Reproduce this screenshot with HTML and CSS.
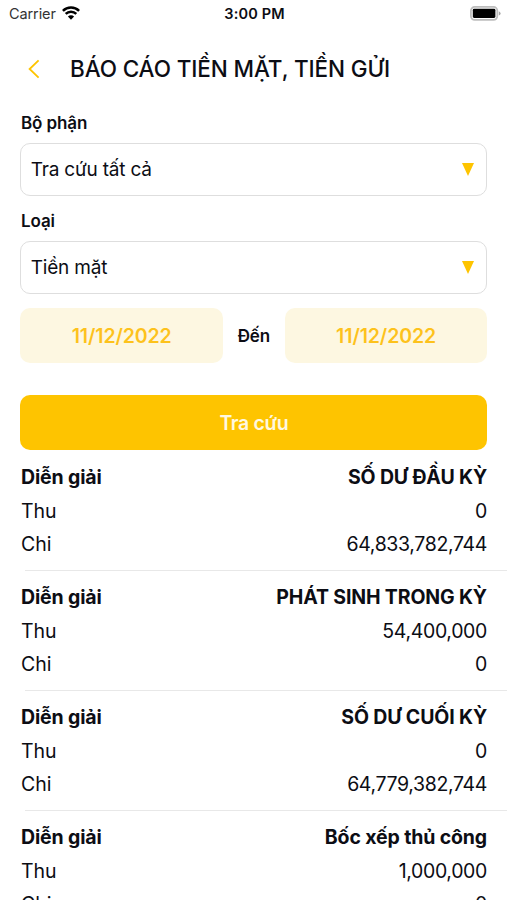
FILE: index.html
```
<!DOCTYPE html>
<html lang="vi">

<head>
    <meta charset="utf-8" />
    <title>Báo cáo tiền mặt, tiền gửi</title>
    <link rel="stylesheet" href="styles.css">
</head>

<body>
    <div class="status">
        <div class="carrier">
            <span>Carrier</span>
            <svg class="wifi" width="18" height="14" viewBox="0 0 18 14">
                <path d="M0.9 4.9a11.5 11.5 0 0 1 16.2 0M3.7 7.9a7.5 7.5 0 0 1 10.6 0" fill="none" stroke="#000" stroke-width="2.5" />
                <path d="M9 13.8L5.9 10.6a4.4 4.4 0 0 1 6.2 0z" />
            </svg>
        </div>
        <span class="time">3:00 PM</span>
        <div class="power">
            <svg width="31" height="15" viewBox="0 0 31 15">
                <rect x="0.9" y="0.9" width="26.4" height="13" rx="3.8" fill="#fff" stroke="#bdbdbd" stroke-width="1.8" />
                <rect x="2.8" y="2.8" width="22.6" height="9.2" rx="1.4" />
                <path d="M28.8 5.2q1.8 0.7 1.8 2.2t-1.8 2.2z" fill="#a5a5a5" />
            </svg>
        </div>
    </div>

    <div class="header">
        <svg class="back" width="12" height="20" viewBox="0 0 12 20">
            <path d="M10.6 1.4L1.6 10l9 8.6" fill="none" stroke="#fec400" stroke-width="1.8" />
        </svg>
        <h1>BÁO CÁO TIỀN MẶT, TIỀN GỬI</h1>
    </div>

    <div class="form">
        <label>Bộ phận</label>
        <div class="select">
            <span>Tra cứu tất cả</span>
            <svg width="12" height="13" viewBox="0 0 12 13"><path d="M0 0h12L6 13z" fill="#fec400" /></svg>
        </div>
        <label>Loại</label>
        <div class="select">
            <span>Tiền mặt</span>
            <svg width="12" height="13" viewBox="0 0 12 13"><path d="M0 0h12L6 13z" fill="#fec400" /></svg>
        </div>
        <div class="dates">
            <div class="date">11/12/2022</div>
            <span class="to">Đến</span>
            <div class="date">11/12/2022</div>
        </div>
        <div class="submit">Tra cứu</div>
    </div>

    <div class="list">
        <div class="item">
            <div class="row title"><span>Diễn giải</span><span>SỐ DƯ ĐẦU KỲ</span></div>
            <div class="row"><span>Thu</span><span class="value">0</span></div>
            <div class="row"><span>Chi</span><span class="value">64,833,782,744</span></div>
        </div>
        <div class="item">
            <div class="row title"><span>Diễn giải</span><span>PHÁT SINH TRONG KỲ</span></div>
            <div class="row"><span>Thu</span><span class="value">54,400,000</span></div>
            <div class="row"><span>Chi</span><span class="value">0</span></div>
        </div>
        <div class="item">
            <div class="row title"><span>Diễn giải</span><span>SỐ DƯ CUỐI KỲ</span></div>
            <div class="row"><span>Thu</span><span class="value">0</span></div>
            <div class="row"><span>Chi</span><span class="value">64,779,382,744</span></div>
        </div>
        <div class="item">
            <div class="row title"><span>Diễn giải</span><span>Bốc xếp thủ công</span></div>
            <div class="row"><span>Thu</span><span class="value">1,000,000</span></div>
            <div class="row"><span>Chi</span><span class="value">0</span></div>
        </div>
    </div>
</body>
</html>
```
FILE: styles.css
```
* {
    box-sizing: border-box;
}

body {
    margin: 0;
    height: 900px;
    overflow: hidden;
    background: #fff;
    color: #0c0d14;
    font-family: Inter, "Liberation Sans", sans-serif;
    font-size: 19.5px;
}

svg {
    display: block;
    flex: none;
}

.status {
    display: grid;
    grid-template-columns: 1fr auto 1fr;
    align-items: center;
    height: 27px;
    padding: 0 6px 0 9px;
    font-size: 14.5px;
}

.carrier {
    display: flex;
    align-items: center;
    gap: 6px;
    color: #333;
    letter-spacing: -0.1px;
}

.wifi {
    margin-top: -2px;
}

.time {
    margin-left: -1px;
    font-weight: 600;
    letter-spacing: 0.15px;
}

.power {
    justify-self: end;
    margin-top: -1px;
}

.header {
    display: flex;
    align-items: center;
    height: 83px;
    padding-left: 28px;
}

.header h1 {
    margin: 0 0 0 30px;
    font-size: 22.5px;
    font-weight: 500;
    letter-spacing: -0.11px;
    white-space: nowrap;
}

.form {
    padding: 0 19.6px 0 20.4px;
}

.form label {
    display: block;
    height: 33px;
    padding-left: 0.6px;
    font-size: 17px;
    font-weight: 600;
    letter-spacing: -0.1px;
    line-height: 26px;
}

.select {
    display: flex;
    align-items: center;
    justify-content: space-between;
    height: 53px;
    margin-bottom: 12px;
    padding: 0 12.4px 0 9.4px;
    border: 1.5px solid #dedede;
    border-radius: 10px;
    font-size: 19px;
    letter-spacing: -0.2px;
}

.dates {
    display: flex;
    align-items: center;
    justify-content: space-between;
    margin-top: 14px;
}

.date {
    width: 202.6px;
    height: 55px;
    border-radius: 10px;
    background: #fdf7e1;
    color: #fdc21c;
    font-weight: 600;
    letter-spacing: -0.1px;
    line-height: 57px;
    text-align: center;
}

.to {
    font-size: 17px;
    font-weight: 600;
    letter-spacing: -0.1px;
}

.submit {
    height: 55px;
    margin-top: 32.4px;
    border-radius: 10px;
    background: #fec400;
    color: #fff8e0;
    font-weight: 600;
    letter-spacing: -0.35px;
    line-height: 56px;
    text-align: center;
}

.list {
    padding-top: 10.6px;
}

.item {
    height: 120px;
    padding: 0 20px 0 21px;
}

/* separator starts after the text edge and runs off the right side */
.item:after {
    content: "";
    display: block;
    height: 1px;
    margin: 8px -20px 0 4px;
    background: #e8e8e8;
}

.row {
    display: flex;
    justify-content: space-between;
    height: 33.6px;
    line-height: 33.6px;
}

.value {
    letter-spacing: -0.35px;
}

.title {
    font-weight: 700;
    letter-spacing: -0.14px;
}
```
